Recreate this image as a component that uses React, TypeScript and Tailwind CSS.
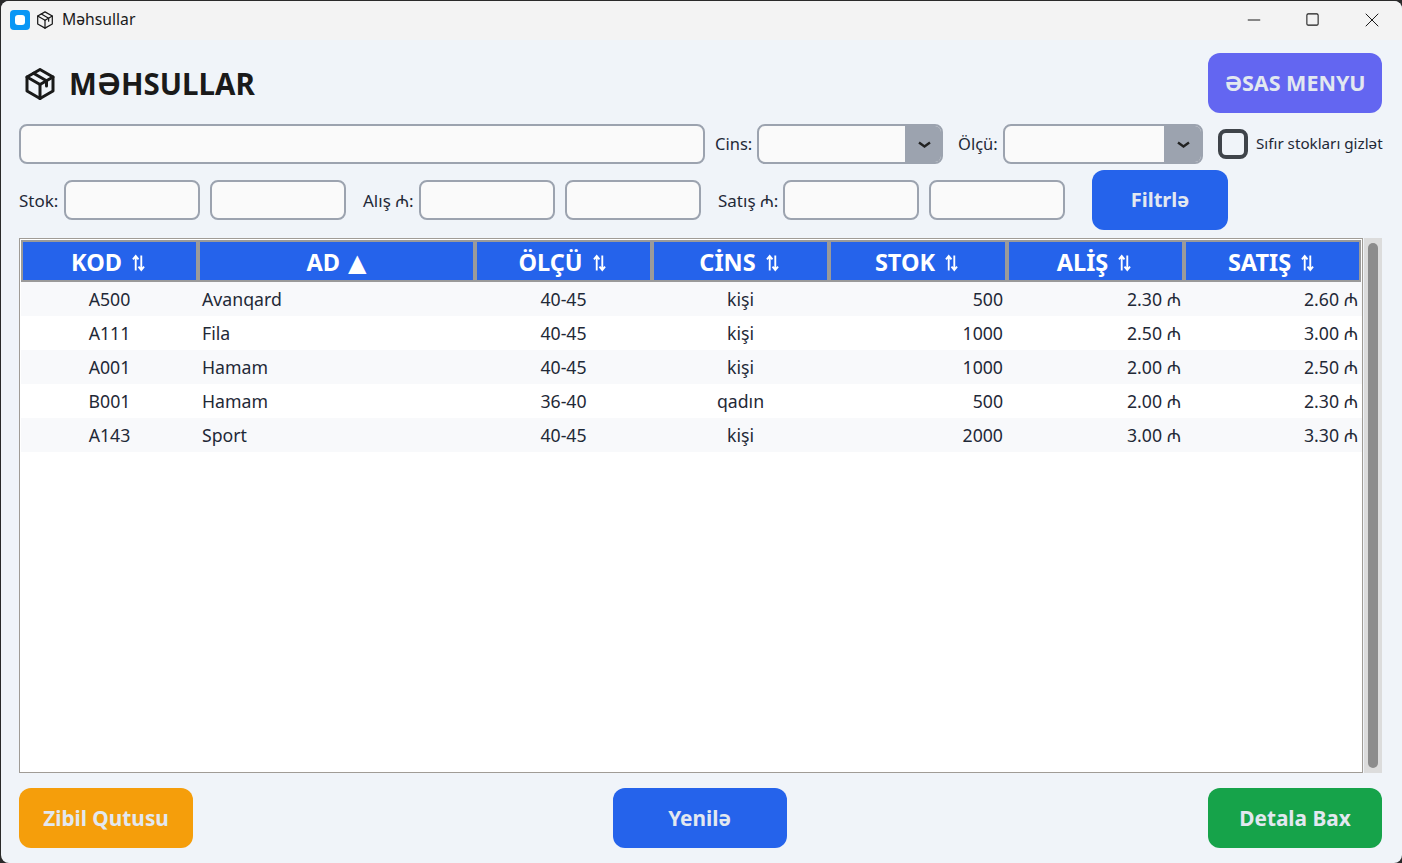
import { Minus, Square, X } from 'lucide-react';

const font = "font-['Noto_Sans','Open_Sans',sans-serif]";

const columns = [
  { label: 'KOD', width: 'w-[177px]' },
  { label: 'AD', width: 'w-[277px]', sorted: true },
  { label: 'ÖLÇÜ', width: 'w-[177px]' },
  { label: 'CİNS', width: 'w-[177px]' },
  { label: 'STOK', width: 'w-[178px]' },
  { label: 'ALİŞ', width: 'w-[177px]' },
  { label: 'SATIŞ', width: 'w-[177px]' },
];

const rows = [
  ['A500', 'Avanqard', '40-45', 'kişi', '500', '2.30 ₼', '2.60 ₼'],
  ['A111', 'Fila', '40-45', 'kişi', '1000', '2.50 ₼', '3.00 ₼'],
  ['A001', 'Hamam', '40-45', 'kişi', '1000', '2.00 ₼', '2.50 ₼'],
  ['B001', 'Hamam', '36-40', 'qadın', '500', '2.00 ₼', '2.30 ₼'],
  ['A143', 'Sport', '40-45', 'kişi', '2000', '3.00 ₼', '3.30 ₼'],
];

const cellAlign = [
  'text-center',
  'text-left pl-[4px]',
  'text-center',
  'text-center',
  'text-right pr-[4px]',
  'text-right pr-[3px]',
  'text-right pr-[3px]',
];

function BoxIcon({ size, stroke }: { size: number; stroke: number }) {
  return (
    <svg width={size} height={size} viewBox="0 0 32 32" fill="none" stroke="#1a1a1a" strokeWidth={stroke} strokeLinejoin="round" strokeLinecap="round">
      <path d="M16 1.5 L29 9 V23 L16 30.5 L3 23 V9 Z" />
      <path d="M3 9 L16 16.5 L29 9" />
      <path d="M16 16.5 V30.5" />
      <path d="M9.5 5.2 L22.5 12.8 V18" />
    </svg>
  );
}

function SortIcon() {
  return (
    <svg width="13" height="18" viewBox="0 0 14 18" fill="none" stroke="#ffffff" strokeWidth="2" className="ml-[10px] mr-[3px]">
      <path d="M4 17 V2 M1 5 L4 1.5 L7 5" />
      <path d="M10 1 V16 M7 13 L10 16.5 L13 13" />
    </svg>
  );
}

function Field({ className }: { className: string }) {
  return <div className={`h-10 shrink-0 rounded-lg border-2 border-[#9ca3af] bg-[#fafafa] ${className}`} />;
}

function SelectBox({ className, arrow }: { className: string; arrow: string }) {
  return (
    <div className={`flex h-10 shrink-0 overflow-hidden rounded-lg border-2 border-[#9ca3af] bg-[#fafafa] ${className}`}>
      <div className="flex-1" />
      <div className={`flex items-center justify-center bg-[#9ca3af] pl-[2px] ${arrow}`}>
        <svg width="13" height="7" viewBox="0 0 13 7" fill="none" stroke="#222" strokeWidth="2.4">
          <path d="M1 1.5 L6.5 5.5 L12 1.5" />
        </svg>
      </div>
    </div>
  );
}

export default function App() {
  return (
    <div className={`h-[863px] w-[1402px] overflow-hidden bg-[#2a2a2a] ${font}`}>
      <div className="ml-px mt-px flex h-[862px] w-[1401px] flex-col overflow-hidden rounded-lg bg-[#f0f4f9]">
        {/* title bar */}
        <div className="flex h-[39px] items-center bg-[#f3f3f3] pb-[2px] pl-[9px] text-[#1a1a1a]">
          <div className="flex h-5 w-5 items-center justify-center rounded-[4px] bg-[#0a97f5]">
            <div className="h-[10px] w-[10px] rounded-[3px] bg-white" />
          </div>
          <div className="ml-[6px]"><BoxIcon size={18} stroke={2.2} /></div>
          <span className="ml-[8px] text-[15.7px] leading-none">Məhsullar</span>
          <div className="ml-auto flex items-center pr-[1px] text-[#1a1a1a]">
            <div className="flex w-[58px] justify-center"><Minus size={20} strokeWidth={1.2} /></div>
            <div className="flex w-[60px] justify-center pr-[2px]"><Square size={15} strokeWidth={1.7} /></div>
            <div className="flex w-[58px] justify-center pr-px"><X size={24} strokeWidth={1} /></div>
          </div>
        </div>

        <div className="flex flex-1 flex-col pl-[18px] pr-[20px] pt-[13px]">
          {/* heading */}
          <div className="flex h-[60px] items-center justify-between">
            <div className="flex items-center pl-[5px] pt-[2px]">
              <BoxIcon size={32} stroke={3} />
              <h1 className="ml-[13px] text-[29.5px] font-bold leading-none text-[#1a1a1a]">MƏHSULLAR</h1>
            </div>
            <button className="h-[60px] w-[174px] rounded-xl bg-[#6366f1] pt-px text-[21.5px] font-bold text-[#e2e8f0]">ƏSAS MENYU</button>
          </div>

          {/* first filter row */}
          <div className="mt-[11px] flex items-center text-[16.5px] text-[#1f2937]">
            <Field className="w-[686px]" />
            <span className="ml-[10px] w-[37px] shrink-0 whitespace-nowrap pt-px">Cins:</span>
            <SelectBox className="ml-[5px] w-[186px]" arrow="w-[36px]" />
            <span className="ml-[15px] w-[40px] shrink-0 whitespace-nowrap pt-px">Ölçü:</span>
            <SelectBox className="ml-[5px] w-[200px]" arrow="w-[37px]" />
            <div className="ml-[15px] h-[30px] w-[30px] shrink-0 rounded-lg border-[4px] border-[#3f444a]" />
            <span className="ml-[8px] whitespace-nowrap pb-[2px] text-[15.2px]">Sıfır stokları gizlət</span>
          </div>

          {/* second filter row */}
          <div className="mt-[6px] flex h-[60px] items-center text-[17px] text-[#1f2937]">
            <span className="w-[40px] whitespace-nowrap pt-px">Stok:</span>
            <Field className="ml-[5px] w-[136px]" />
            <Field className="ml-[10px] w-[136px]" />
            <span className="ml-[17px] w-[51px] whitespace-nowrap pt-px">Alış ₼:</span>
            <Field className="ml-[5px] w-[136px]" />
            <Field className="ml-[10px] w-[136px]" />
            <span className="ml-[17px] w-[60px] whitespace-nowrap pt-px">Satış ₼:</span>
            <Field className="ml-[5px] w-[136px]" />
            <Field className="ml-[10px] w-[136px]" />
            <button className="ml-[27px] h-[60px] w-[136px] rounded-xl bg-[#2563eb] text-[20px] font-bold text-[#e2e8f0]">Filtrlə</button>
          </div>

          {/* table */}
          <div className="mt-[8px] flex h-[535px]">
            <div className="w-[1345px] border border-[#a09c96] bg-white pl-px pt-px">
              <div className="flex h-[42px] w-[1341px]">
                {columns.map((col) => (
                  <div
                    key={col.label}
                    className={`flex items-center justify-center border-2 border-[#9a9a9a] bg-[#2563eb] pt-[4px] text-[23.5px] font-bold text-white ${col.width}`}
                  >
                    {col.label}
                    {col.sorted ? <span className="ml-[8px] font-['DejaVu_Sans',sans-serif] text-[24px] leading-none">▲</span> : <SortIcon />}
                  </div>
                ))}
              </div>
              {rows.map((row, i) => (
                <div key={row[0] + row[1]} className={`flex h-[34px] w-[1341px] items-center text-[17.7px] text-[#1f2937] ${i % 2 === 0 ? 'bg-[#f8f9fb]' : 'bg-white'}`}>
                  {row.map((cell, j) => (
                    <div key={j} className={`${columns[j].width} ${cellAlign[j]}`}>{cell}</div>
                  ))}
                </div>
              ))}
            </div>
            <div className="ml-px flex w-[19px] justify-center bg-[#dcdcdc] py-[5px]">
              <div className="w-[10px] rounded-full bg-[#8c8c8c]" />
            </div>
          </div>

          {/* bottom buttons */}
          <div className="mt-[15px] flex justify-between text-[20.8px] font-bold text-[#e2e8f0]">
            <button className="h-[60px] w-[174px] rounded-xl bg-[#f59e0b] pt-px">Zibil Qutusu</button>
            <button className="mr-[2px] h-[60px] w-[174px] rounded-xl bg-[#2563eb] pt-px">Yenilə</button>
            <button className="h-[60px] w-[174px] rounded-xl bg-[#16a34a] pt-px">Detala Bax</button>
          </div>
        </div>
      </div>
    </div>
  );
}
